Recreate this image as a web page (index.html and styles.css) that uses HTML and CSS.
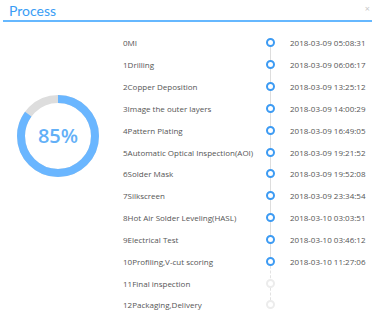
FILE: index.html
```html
<!DOCTYPE html>
<html>
<head>
<meta charset="utf-8">
<link rel="stylesheet" href="styles.css">
</head>
<body>
<div class="dialog">
  <div class="header">
    <span class="title">Process</span>
    <span class="close">×</span>
  </div>
  <div class="main">
    <div class="side">
      <div class="ring">
        <svg width="82" height="82" viewBox="0 0 82 82">
          <circle cx="41" cy="41" r="37" fill="none" stroke="#dddddd" stroke-width="8"/>
          <circle cx="41" cy="41" r="37" fill="none" stroke="#6ab6ff" stroke-width="8" stroke-dasharray="197.6 300" transform="rotate(-90 41 41)"/>
        </svg>
        <span class="pct">85%</span>
      </div>
    </div>
    <ul class="steps">
      <li class="step done"><span class="label">0MI</span><span class="node"><i></i></span><span class="date">2018-03-09 05:08:31</span></li>
      <li class="step done"><span class="label">1Drilling</span><span class="node"><i></i></span><span class="date">2018-03-09 06:06:17</span></li>
      <li class="step done"><span class="label">2Copper Deposition</span><span class="node"><i></i></span><span class="date">2018-03-09 13:25:12</span></li>
      <li class="step done"><span class="label">3Image the outer layers</span><span class="node"><i></i></span><span class="date">2018-03-09 14:00:29</span></li>
      <li class="step done"><span class="label">4Pattern Plating</span><span class="node"><i></i></span><span class="date">2018-03-09 16:49:05</span></li>
      <li class="step done"><span class="label">5Automatic Optical Inspection(AOI)</span><span class="node"><i></i></span><span class="date">2018-03-09 19:21:52</span></li>
      <li class="step done"><span class="label">6Solder Mask</span><span class="node"><i></i></span><span class="date">2018-03-09 19:52:08</span></li>
      <li class="step done"><span class="label">7Silkscreen</span><span class="node"><i></i></span><span class="date">2018-03-09 23:34:54</span></li>
      <li class="step done"><span class="label">8Hot Air Solder Leveling(HASL)</span><span class="node"><i></i></span><span class="date">2018-03-10 03:03:51</span></li>
      <li class="step done"><span class="label">9Electrical Test</span><span class="node"><i></i></span><span class="date">2018-03-10 03:46:12</span></li>
      <li class="step done last-done"><span class="label">10Profiling,V-cut scoring</span><span class="node"><i></i></span><span class="date">2018-03-10 11:27:06</span></li>
      <li class="step todo"><span class="label">11Final inspection</span><span class="node"><i></i></span><span class="date"></span></li>
      <li class="step todo end"><span class="label">12Packaging,Delivery</span><span class="node"><i></i></span><span class="date"></span></li>
    </ul>
  </div>
</div>
</body>
</html>
```
FILE: styles.css
```css
* { box-sizing: border-box; }
html, body { margin: 0; padding: 0; background: #fff; }
body { width: 375px; height: 325px; overflow: hidden; font-family: "Open Sans", "Noto Sans", sans-serif; }

.dialog { width: 375px; }

.header {
  margin: 0 3px;
  height: 22px;
  border-bottom: 2px solid #66b8ff;
  display: flex;
  justify-content: space-between;
  align-items: flex-start;
}
.title {
  font-family: "Lato", sans-serif;
  font-size: 14px;
  line-height: 14px;
  color: #3a9df5;
  padding: 4px 0 0 6px;
}
.close {
  font-size: 9px;
  line-height: 9px;
  color: #c8c8c8;
  padding: 4px 2px 0 0;
}

.main {
  display: flex;
  padding-top: 10px;
}
.side {
  width: 123px;
  padding: 63px 0 0 17px;
}
.ring {
  position: relative;
  width: 82px;
  height: 82px;
}
.ring svg { display: block; }
.pct {
  position: absolute;
  inset: 0;
  display: flex;
  align-items: center;
  justify-content: center;
  font-size: 20px;
  font-weight: 600;
  color: #63b0f7;
  padding-bottom: 1px;
}

.steps {
  list-style: none;
  margin: 0;
  padding: 0;
}
.step {
  display: grid;
  grid-template-columns: 139px 17px 90px;
  height: 21.83px;
  align-items: center;
  font-size: 8px;
}
.label { color: #555; white-space: nowrap; }
.date { color: #555; padding-left: 11px; white-space: nowrap; }
.node {
  position: relative;
  height: 100%;
  display: flex;
  align-items: center;
  justify-content: center;
}
.node i {
  display: block;
  width: 9px;
  height: 9px;
  border-radius: 50%;
  border: 2px solid #3d9bf3;
  background: #fff;
  position: relative;
  z-index: 1;
}
.node::after {
  content: "";
  position: absolute;
  left: 8px;
  top: 50%;
  height: 100%;
  border-left: 1px solid #dddddd;
}
.last-done .node::after,
.todo .node::after { border-left: 1px dashed #e2e2e2; }
.end .node::after { display: none; }
.todo .node i { border-color: #ececec; }
```
